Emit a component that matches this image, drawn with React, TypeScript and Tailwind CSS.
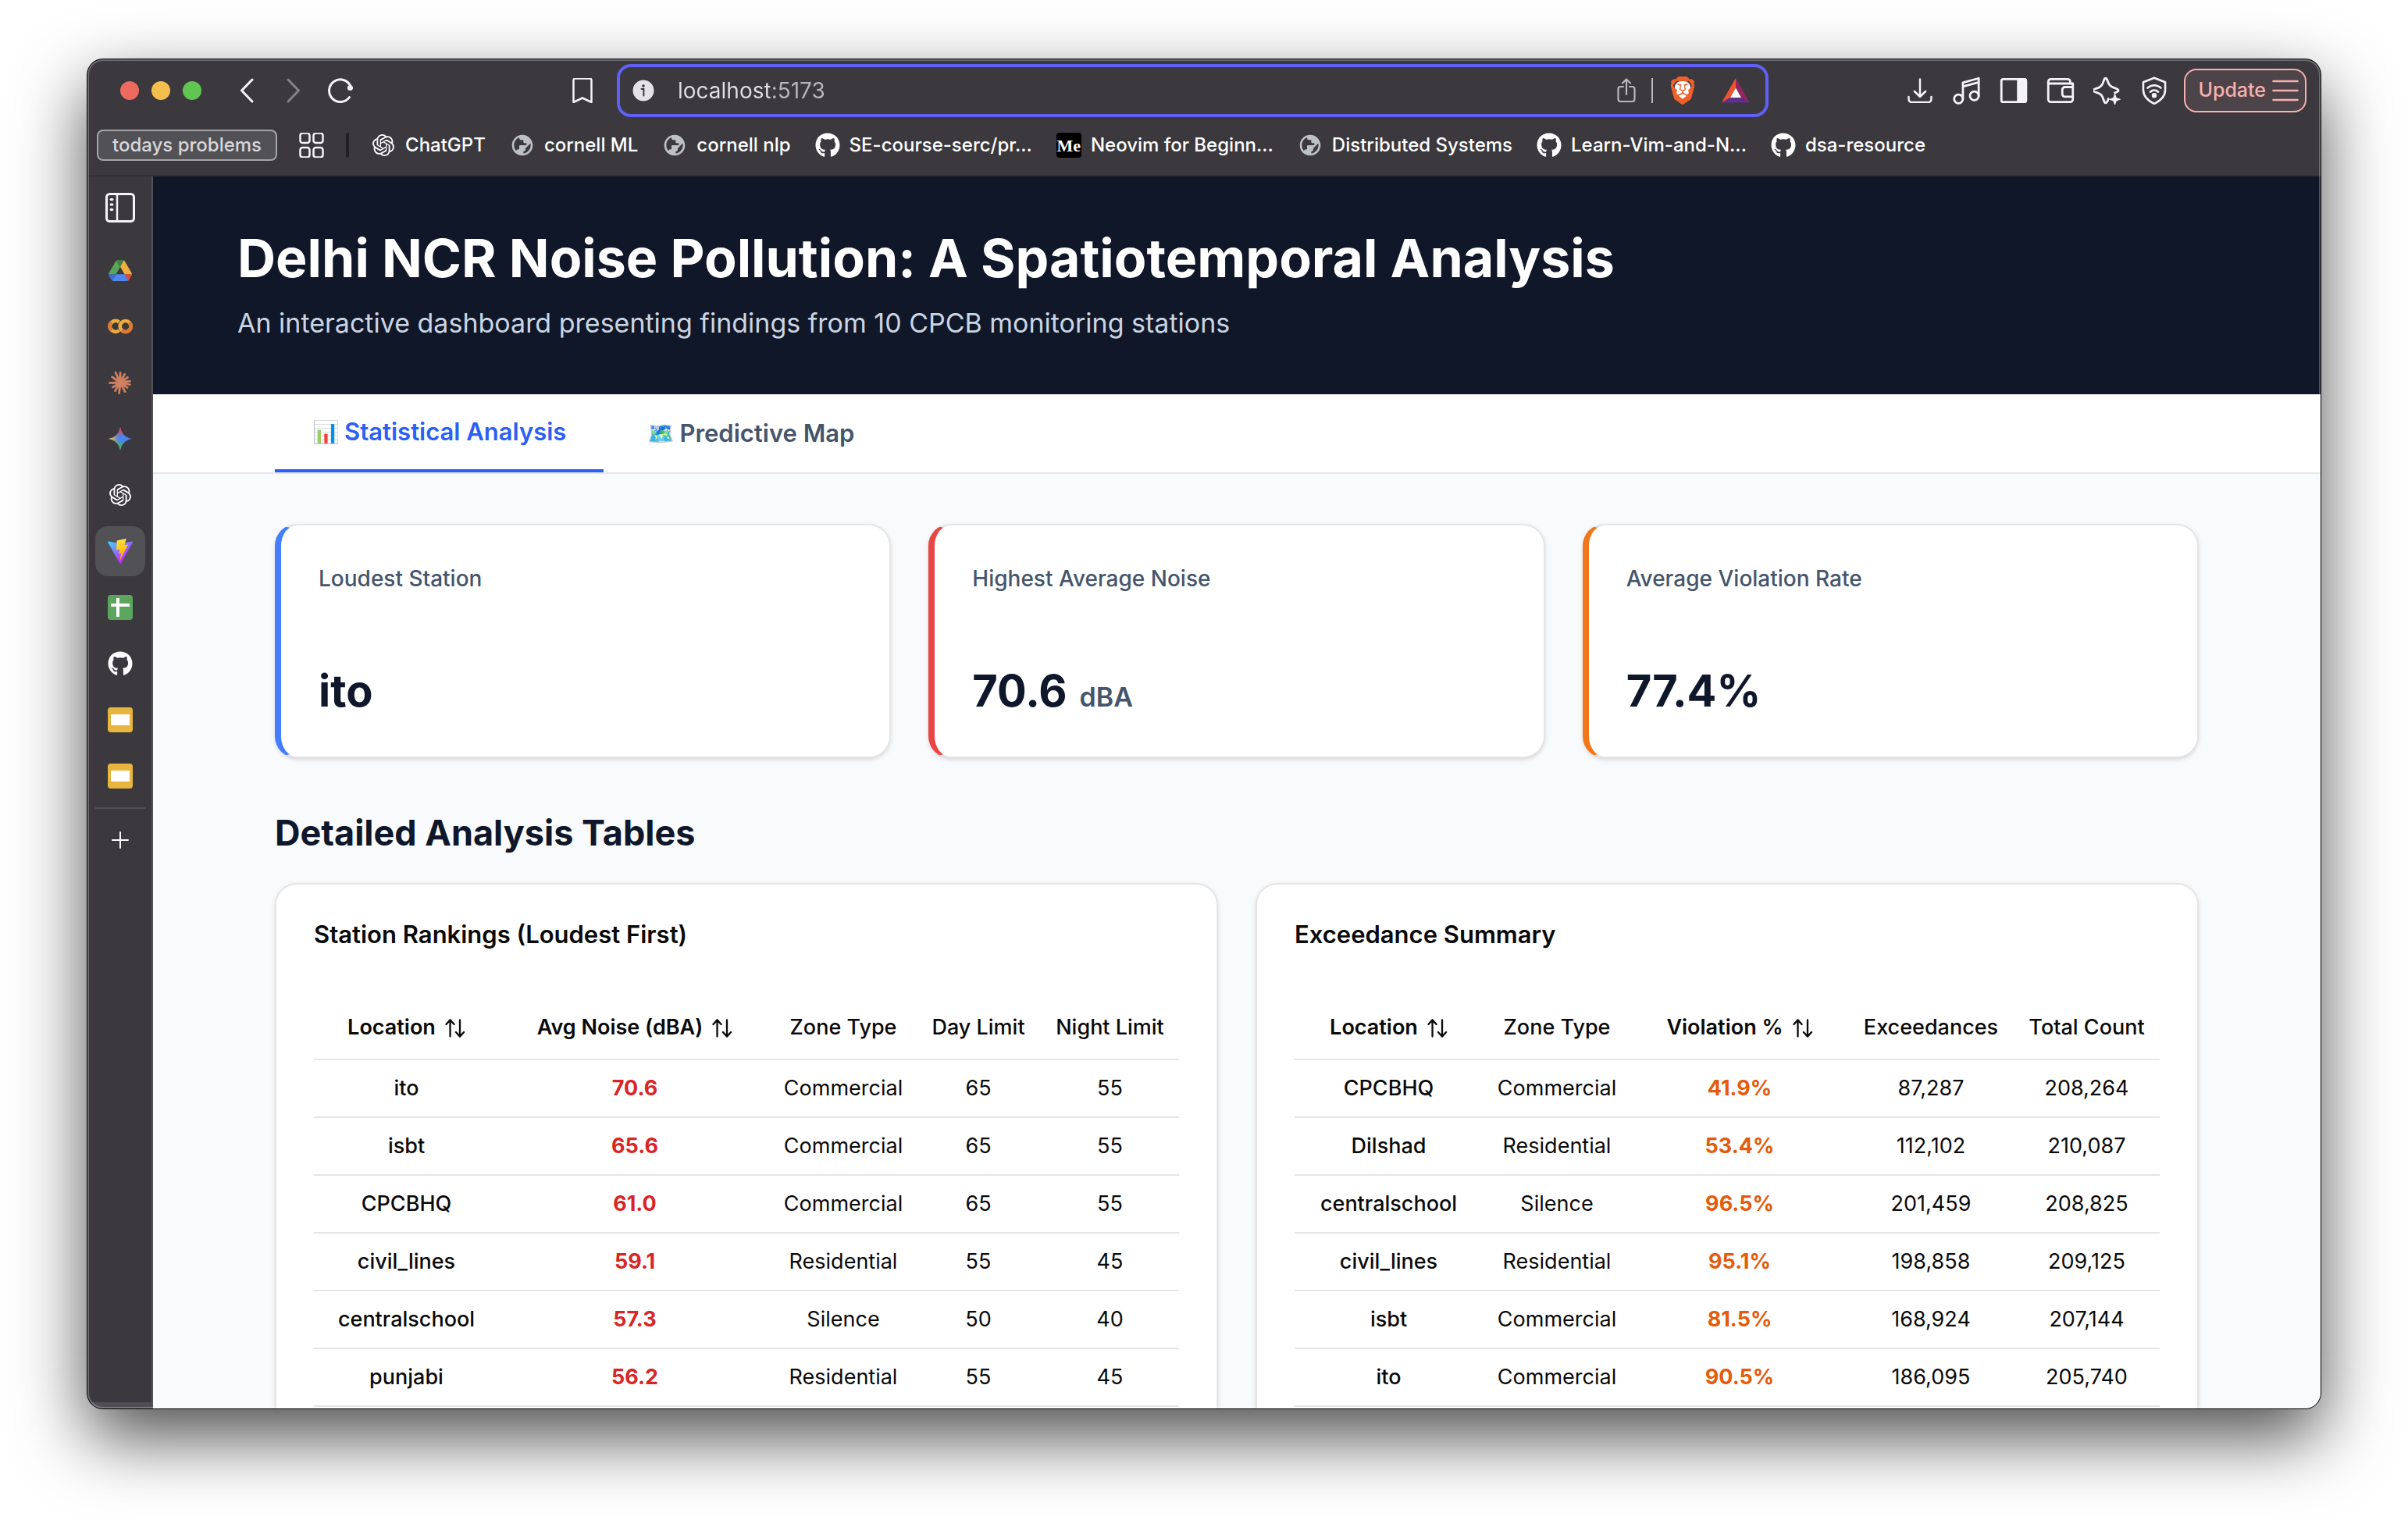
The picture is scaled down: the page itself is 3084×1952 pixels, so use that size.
import type { ReactNode } from 'react';
import { FaGithub } from 'react-icons/fa';
import { MdPublic } from 'react-icons/md';
import { SiBrave } from 'react-icons/si';

/* ---------- toolbar icons ---------- */

function Line({ children, className = 'size-8', width = 2.5 }: { children: ReactNode; className?: string; width?: number }) {
  return (
    <svg viewBox="0 0 32 32" className={className} fill="none" stroke="currentColor" strokeWidth={width} strokeLinecap="round" strokeLinejoin="round" aria-hidden="true">
      {children}
    </svg>
  );
}

const BackIcon = () => (
  <Line width={3}><path d="M23 2 L9.5 16 L23 30" /></Line>
);
const ForwardIcon = () => (
  <Line width={3}><path d="M9 2 L22.5 16 L9 30" /></Line>
);
const ReloadIcon = () => (
  <Line width={3}>
    <path d="M27.5 24.500 A14.3 14.3 0 1 1 29 10.500" />
    <circle cx="28.500" cy="12.500" r="3.600" fill="currentColor" stroke="none" />
  </Line>
);
const BookmarkIcon = () => (
  <Line><path d="M4.500 2.500 a2.500 2.500 0 0 1 2.500 -2 h18 a2.500 2.500 0 0 1 2.500 2.500 V31 L16 25.500 L4.500 31 Z" /></Line>
);
const InfoIcon = () => (
  <svg viewBox="0 0 28 28" className="size-7" aria-hidden="true">
    <circle cx="14" cy="14" r="13.500" fill="#e4e2e8" />
    <circle cx="14" cy="8" r="1.800" fill="#3b393e" />
    <path d="M11.500 12 H14.400 V20.500" fill="none" stroke="#3b393e" strokeWidth="2" strokeLinecap="round" />
  </svg>
);
const ShareIcon = () => (
  <svg viewBox="0 0 24 32" className="h-8 w-6" fill="none" stroke="currentColor" strokeWidth="2.200" strokeLinecap="round" strokeLinejoin="round" aria-hidden="true">
    <path d="M8 11 H4.500 A3 3 0 0 0 1.500 14 V27 A3 3 0 0 0 4.500 30 H19.500 A3 3 0 0 0 22.500 27 V14 A3 3 0 0 0 19.500 11 H16" />
    <path d="M12 21 V2 M7 6.500 L12 1.500 L17 6.500" />
  </svg>
);
const BatIcon = () => (
  <svg viewBox="0 0 36 32" className="h-8 w-9" aria-hidden="true">
    <path d="M18 0 L0 31.500 L11 25 L18 12.500 Z" fill="#f1532f" />
    <path d="M18 0 L36 31.500 L25 25 L18 12.500 Z" fill="#92265f" />
    <path d="M0 31.500 H36 L25 25 H11 Z" fill="#5f2f8c" />
    <path d="M18 12.500 L25 25 H11 Z" fill="#fff" />
  </svg>
);
const DownloadIcon = () => (
  <Line><path d="M16 1.500 V24 M9 17 L16 24 L23 17 M1.500 24 V27 A4 4 0 0 0 5.500 31 H26.500 A4 4 0 0 0 30.500 27 V24" /></Line>
);
const MusicIcon = () => (
  <Line className="size-9">
    <circle cx="6.500" cy="25.500" r="5" />
    <circle cx="24.500" cy="22" r="5" />
    <path d="M11.500 25.500 V7 L29.500 2 V22 M11.500 11.500 L29.500 6.500" />
  </Line>
);
const PanelIcon = () => (
  <Line className="size-9">
    <rect x="2" y="3" width="28" height="26" rx="2" />
    <path d="M21 3 H28 A2 2 0 0 1 30 5 V27 A2 2 0 0 1 28 29 H21 Z" fill="currentColor" />
  </Line>
);
const WalletIcon = () => (
  <Line className="size-9">
    <path d="M30 12 V8 H2 V26 A3 3 0 0 0 5 29 H27 A3 3 0 0 0 30 26 V23" />
    <path d="M2 8 V6 A3 3 0 0 1 5 3 H24 A3 3 0 0 1 27 6 V8" />
    <path d="M30 12 H21 A3 3 0 0 0 18 15 V20 A3 3 0 0 0 21 23 H30 Z" />
  </Line>
);
const SparkleIcon = () => (
  <Line className="size-9">
    <path d="M14 2 C15 2 15.500 3 16 4.500 C17.500 9 19 11.500 24 13 C27.500 14 28.500 14.500 28.500 16 C28.500 17.300 27 17.800 24.500 18.500 M17 25.500 C16.300 28.500 15.500 30 14 30 C12.700 30 12.200 28.500 11.500 26 C10 21.500 8.500 19.500 4 18.300 C1 17.500 -0.300 17 -0.300 16 C-0.300 14.700 1 14.300 4 13.500 C9 12 10.300 9.500 11.800 5 C12.300 3 13 2 14 2" />
    <path d="M24.500 20 L26 24.500 L30.500 26 L26 27.500 L24.500 32 L23 27.500 L18.500 26 L23 24.500 Z" fill="currentColor" strokeWidth="1" />
  </Line>
);
const VpnIcon = () => (
  <Line className="size-9" width={2.3}>
    <path d="M16 1.500 L28.500 6.500 V15 C28.500 22.500 22 28 16 31 C10 28 3.500 22.500 3.500 15 V6.500 Z" />
    <path d="M8.500 13 C13 9 19 9 23.500 13 M11.500 17.500 C14.200 15 17.800 15 20.500 17.500" />
    <circle cx="16" cy="21.500" r="1.700" fill="currentColor" />
  </Line>
);
const MenuIcon = () => (
  <svg viewBox="0 0 34 28" className="h-7 w-[34px]" stroke="currentColor" strokeWidth="2.500" strokeLinecap="round" aria-hidden="true">
    <path d="M1.500 2 H32.500 M1.500 14 H32.500 M1.500 26 H32.500" />
  </svg>
);
const AppsIcon = () => (
  <Line>
    <rect x="1.500" y="0.500" width="12" height="12.500" rx="3" />
    <rect x="18.500" y="0.500" width="12" height="12.500" rx="3" />
    <rect x="1.500" y="19" width="12" height="12.500" rx="3" />
    <rect x="18.500" y="19" width="12" height="12.500" rx="3" />
  </Line>
);

/* ---------- brand marks ---------- */

const OpenAiIcon = () => (
  <svg viewBox="0 0 24 24" className="size-7" fill="currentColor" aria-hidden="true">
    <path d="M22.2819 9.8211a5.9847 5.9847 0 0 0-.5157-4.9108 6.0462 6.0462 0 0 0-6.5098-2.9A6.0651 6.0651 0 0 0 4.9807 4.1818a5.9847 5.9847 0 0 0-3.9977 2.9 6.0462 6.0462 0 0 0 .7427 7.0966 5.98 5.98 0 0 0 .511 4.9107 6.051 6.051 0 0 0 6.5146 2.9001A5.9847 5.9847 0 0 0 13.2599 24a6.0557 6.0557 0 0 0 5.7718-4.2058 5.9894 5.9894 0 0 0 3.9977-2.9001 6.0557 6.0557 0 0 0-.7475-7.0729zm-9.022 12.6081a4.4755 4.4755 0 0 1-2.8764-1.0408l.1419-.0804 4.7783-2.7582a.7948.7948 0 0 0 .3927-.6813v-6.7369l2.02 1.1686a.071.071 0 0 1 .038.052v5.5826a4.504 4.504 0 0 1-4.4945 4.4944zm-9.6607-4.1254a4.4708 4.4708 0 0 1-.5346-3.0137l.142.0852 4.783 2.7582a.7712.7712 0 0 0 .7806 0l5.8428-3.3685v2.3324a.0804.0804 0 0 1-.0332.0615L9.74 19.9502a4.4992 4.4992 0 0 1-6.1408-1.6464zM2.3408 7.8956a4.485 4.485 0 0 1 2.3655-1.9728V11.6a.7664.7664 0 0 0 .3879.6765l5.8144 3.3543-2.0201 1.1685a.0757.0757 0 0 1-.071 0l-4.8303-2.7865A4.504 4.504 0 0 1 2.3408 7.872zm16.5963 3.8558L13.1038 8.364 15.1192 7.2a.0757.0757 0 0 1 .071 0l4.8303 2.7913a4.4944 4.4944 0 0 1-.6765 8.1042v-5.6772a.79.79 0 0 0-.407-.667zm2.0107-3.0231l-.142-.0852-4.7735-2.7818a.7759.7759 0 0 0-.7854 0L9.409 9.2297V6.8974a.0662.0662 0 0 1 .0284-.0615l4.8303-2.7866a4.4992 4.4992 0 0 1 6.6802 4.66zM8.3065 12.863l-2.02-1.1638a.0804.0804 0 0 1-.038-.0567V6.0742a4.4992 4.4992 0 0 1 7.3757-3.4537l-.142.0805L8.704 5.459a.7948.7948 0 0 0-.3927.6813zm1.0976-2.3654l2.602-1.4998 2.6069 1.4998v2.9994l-2.5974 1.4997-2.6067-1.4997Z" />
  </svg>
);
const BraveIcon = () => (
  <span className="grid size-9 place-items-center">
    <span className="col-start-1 row-start-1 h-6 w-5 rounded-lg bg-white" />
    <SiBrave className="col-start-1 row-start-1 size-9 text-[#f0602a]" aria-hidden="true" />
  </span>
);
const DriveIcon = () => (
  <svg viewBox="0 0 87.3 78" className="h-[27px] w-[30px]" aria-hidden="true">
    <path fill="#3b6fdc" d="m6.6 66.85 3.85 6.65c.8 1.4 1.95 2.5 3.3 3.3l13.75-23.8h-27.5c0 1.55.4 3.1 1.2 4.5z" />
    <path fill="#5aa55a" d="m43.65 25-13.75-23.8c-1.35.8-2.5 1.9-3.3 3.3l-25.4 44a9.06 9.06 0 0 0 -1.2 4.5h27.5z" />
    <path fill="#db4b3a" d="m73.55 76.8c1.35-.8 2.5-1.9 3.3-3.3l1.6-2.75 7.65-13.25c.8-1.4 1.2-2.95 1.2-4.5h-27.502l5.852 11.5z" />
    <path fill="#438043" d="m43.65 25 13.75-23.8c-1.35-.8-2.9-1.2-4.5-1.2h-18.5c-1.6 0-3.15.45-4.5 1.2z" />
    <path fill="#5186ec" d="m59.8 53h-32.3l-13.75 23.8c1.35.8 2.9 1.2 4.5 1.2h50.8c1.6 0 3.15-.45 4.5-1.2z" />
    <path fill="#f0b03c" d="m73.4 26.5-12.7-22c-.8-1.4-1.95-2.5-3.3-3.3l-13.75 23.8 16.15 28h27.45c0-1.55-.4-3.1-1.2-4.5z" />
  </svg>
);
const ColabIcon = () => (
  <svg viewBox="0 0 32 20" className="h-5 w-8" fill="none" strokeWidth="4.600" aria-hidden="true">
    <path d="M14.500 4.500 A7 7 0 1 0 14.500 15.300" stroke="#eeae3c" />
    <path d="M4.800 4.600 A7 7 0 0 0 4.800 15.400" stroke="#dd7a33" />
    <circle cx="22.700" cy="10" r="7" stroke="#eeae3c" />
    <path d="M27.600 5 A7 7 0 0 1 17.800 15" stroke="#dd7a33" />
  </svg>
);
const rays = [
  [0, 14], [28, 13.5], [55, 13], [82, 14], [102, 14], [125, 12.5], [152, 14.5], [186, 15], [212, 14], [238, 12.5], [268, 15], [305, 14], [335, 15.5],
];
const ClaudeIcon = () => (
  <svg viewBox="0 0 32 32" className="size-8" aria-hidden="true">
    {rays.map(([angle, length]) => (
      <path key={angle} transform={`translate(16 16) rotate(${angle})`} d={`M-1.700 0 L-1.300 ${-length + 0.6} Q0 ${-length - 0.6} 1.300 ${-length + 0.6} L1.700 0 Z`} fill="#d08162" />
    ))}
    <circle cx="16" cy="16" r="3.500" fill="#d08162" />
  </svg>
);
const GeminiIcon = () => (
  <svg viewBox="0 0 30 30" className="size-[30px]" aria-hidden="true">
    <defs>
      <linearGradient id="gemTop" x1="15" y1="0" x2="17" y2="15" gradientUnits="userSpaceOnUse">
        <stop offset="0.25" stopColor="#e6484b" />
        <stop offset="0.8" stopColor="#e6484b" stopOpacity="0" />
      </linearGradient>
      <linearGradient id="gemLeft" x1="0" y1="15" x2="14" y2="15" gradientUnits="userSpaceOnUse">
        <stop offset="0.2" stopColor="#f3bb33" />
        <stop offset="0.9" stopColor="#f3bb33" stopOpacity="0" />
      </linearGradient>
      <linearGradient id="gemBottom" x1="14" y1="30" x2="17" y2="15" gradientUnits="userSpaceOnUse">
        <stop offset="0.3" stopColor="#4cb063" />
        <stop offset="0.9" stopColor="#4cb063" stopOpacity="0" />
      </linearGradient>
    </defs>
    {['#4b85f0', 'url(#gemTop)', 'url(#gemBottom)', 'url(#gemLeft)'].map((fill) => (
      <path key={fill} fill={fill} d="M15 0 C16.500 8.500 21.500 13.500 30 15 C21.500 16.500 16.500 21.500 15 30 C13.500 21.500 8.500 16.500 0 15 C8.500 13.500 13.500 8.500 15 0 Z" />
    ))}
  </svg>
);
const ViteIcon = () => (
  <svg viewBox="0 0 256 257" className="size-8" aria-hidden="true">
    <defs>
      <linearGradient id="viteBack" x1="-.828%" x2="57.636%" y1="7.652%" y2="78.411%">
        <stop offset="0%" stopColor="#41d1ff" />
        <stop offset="100%" stopColor="#bd34fe" />
      </linearGradient>
      <linearGradient id="viteBolt" x1="43.376%" x2="50.316%" y1="2.242%" y2="89.03%">
        <stop offset="0%" stopColor="#ffea83" />
        <stop offset="8.333%" stopColor="#ffdd35" />
        <stop offset="100%" stopColor="#ffa800" />
      </linearGradient>
    </defs>
    <path fill="url(#viteBack)" d="M255.153 37.938L134.897 252.976c-2.483 4.44-8.862 4.466-11.382.048L.875 37.958c-2.746-4.814 1.371-10.646 6.827-9.67l120.385 21.517a6.537 6.537 0 0 0 2.322-.004l117.867-21.483c5.438-.991 9.574 4.796 6.877 9.62Z" />
    <path fill="url(#viteBolt)" d="M185.432.063L96.44 17.501a3.268 3.268 0 0 0-2.634 3.014l-5.474 92.456a3.268 3.268 0 0 0 3.997 3.378l24.777-5.718c2.318-.535 4.413 1.507 3.936 3.838l-7.361 36.047c-.495 2.426 1.782 4.5 4.151 3.78l15.304-4.649c2.372-.72 4.652 1.36 4.15 3.788l-11.698 56.621c-.732 3.542 3.979 5.473 5.943 2.437l1.313-2.028l72.516-144.72c1.215-2.423-.88-5.186-3.54-4.672l-25.505 4.922c-2.396.462-4.435-1.77-3.759-4.114l16.646-57.705c.677-2.35-1.37-4.583-3.769-4.113Z" />
  </svg>
);
const SheetsIcon = () => (
  <svg viewBox="0 0 32 32" className="size-8" aria-hidden="true">
    <rect width="32" height="32" rx="4" fill="#5ba55c" />
    <path d="M11 4 H15 V11 H28 V15 H15 V28 H11 V15 H4 V11 H11 Z" fill="#fff" />
  </svg>
);
const SlidesIcon = () => (
  <svg viewBox="0 0 32 32" className="size-8" aria-hidden="true">
    <rect width="32" height="32" rx="4" fill="#e8b63e" />
    <rect x="4" y="9" width="24" height="14" fill="#fff" />
  </svg>
);
const TabsPanelIcon = () => (
  <svg viewBox="0 0 38 38" className="size-[38px]" fill="none" stroke="currentColor" strokeWidth="3" aria-hidden="true">
    <rect x="1.500" y="1.500" width="35" height="35" rx="4" />
    <path d="M15 2 V36" strokeWidth="2.500" />
    <g fill="currentColor" stroke="none">
      <ellipse cx="8" cy="8.500" rx="2.500" ry="1.700" />
      <ellipse cx="8" cy="15" rx="2.500" ry="1.700" />
      <ellipse cx="8" cy="21.500" rx="2.500" ry="1.700" />
    </g>
  </svg>
);
const PlusIcon = () => (
  <svg viewBox="0 0 22 22" className="size-[22px]" stroke="currentColor" strokeWidth="2" strokeLinecap="round" aria-hidden="true">
    <path d="M11 1 V21 M1 11 H21" />
  </svg>
);
const GithubIcon = () => <FaGithub className="size-8" aria-hidden="true" />;
const GlobeIcon = () => <MdPublic className="size-8 -scale-x-100 text-[#bdc1c6]" aria-hidden="true" />;
const MediumIcon = () => (
  <span className="flex size-8 items-center justify-center rounded-sm bg-black font-['Liberation_Serif',serif] text-[22px] font-bold">Me</span>
);

/* ---------- browser chrome ---------- */

const bookmarks: { label: string; icon: ReactNode }[] = [
  { label: 'ChatGPT', icon: <OpenAiIcon /> },
  { label: 'cornell ML', icon: <GlobeIcon /> },
  { label: 'cornell nlp', icon: <GlobeIcon /> },
  { label: 'SE-course-serc/pr...', icon: <GithubIcon /> },
  { label: 'Neovim for Beginn...', icon: <MediumIcon /> },
  { label: 'Distributed Systems', icon: <GlobeIcon /> },
  { label: 'Learn-Vim-and-N...', icon: <GithubIcon /> },
  { label: 'dsa-resource', icon: <GithubIcon /> },
];

const toolbarActions: { label: string; icon: ReactNode }[] = [
  { label: 'Downloads', icon: <DownloadIcon /> },
  { label: 'Media', icon: <MusicIcon /> },
  { label: 'Side panel', icon: <PanelIcon /> },
  { label: 'Wallet', icon: <WalletIcon /> },
  { label: 'Assistant', icon: <SparkleIcon /> },
  { label: 'VPN', icon: <VpnIcon /> },
];

const verticalTabs: { label: string; icon: ReactNode; active?: boolean }[] = [
  { label: 'Drive', icon: <DriveIcon /> },
  { label: 'Colab', icon: <ColabIcon /> },
  { label: 'Claude', icon: <ClaudeIcon /> },
  { label: 'Gemini', icon: <GeminiIcon /> },
  { label: 'ChatGPT tab', icon: <OpenAiIcon /> },
  { label: 'Dashboard', icon: <ViteIcon />, active: true },
  { label: 'Sheets', icon: <SheetsIcon /> },
  { label: 'GitHub', icon: <GithubIcon /> },
  { label: 'Slides one', icon: <SlidesIcon /> },
  { label: 'Slides two', icon: <SlidesIcon /> },
];

function Toolbar() {
  return (
    <div className="flex h-20 items-center pl-[42px] pr-[18px] text-[#f4f3f6]">
      <div className="flex gap-4">
        <button aria-label="Close" className="size-6 rounded-full bg-[#ed6a5f]" />
        <button aria-label="Minimize" className="size-6 rounded-full bg-[#f5bf4f]" />
        <button aria-label="Zoom" className="size-6 rounded-full bg-[#61c554]" />
      </div>
      <div className="ml-[42px] flex gap-7">
        <button aria-label="Back"><BackIcon /></button>
        <button aria-label="Forward" className="text-[#858389]"><ForwardIcon /></button>
        <button aria-label="Reload"><ReloadIcon /></button>
      </div>
      <div className="ml-[278px] mr-[176px] flex flex-1 items-center gap-7">
        <button aria-label="Bookmark"><BookmarkIcon /></button>
        <div className="flex h-[68px] flex-1 items-center rounded-[18px] border-4 border-[#6160f6] pl-4 pr-5 text-[#b9b7bd]">
          <InfoIcon />
          <input
            aria-label="Address"
            defaultValue="localhost:5173"
            className="ml-[30px] min-w-0 flex-1 bg-[linear-gradient(90deg,#e2e0e6_118px,#b9b7bd_118px)] bg-clip-text text-[28px] text-transparent outline-none"
          />
          <button aria-label="Share"><ShareIcon /></button>
          <span className="ml-5 h-8 w-0.5 bg-[#b9b7bd]" />
          <button aria-label="Shields" className="ml-5"><BraveIcon /></button>
          <button aria-label="Rewards" className="ml-8"><BatIcon /></button>
        </div>
      </div>
      <div className="flex items-center gap-6">
        {toolbarActions.map((a) => (
          <button key={a.label} aria-label={a.label} className="grid size-9 place-items-center">{a.icon}</button>
        ))}
      </div>
      <button className="ml-5 flex h-14 items-center gap-2 rounded-2xl border-2 border-[#f8b1b1] bg-[#4c4448] pl-4 pr-2 text-[25px] font-medium text-[#f8b1b1]">
        Update
        <MenuIcon />
      </button>
    </div>
  );
}

function BookmarksBar() {
  return (
    <nav aria-label="Bookmarks" className="flex h-[60px] items-center whitespace-nowrap pl-3 text-[24px] font-medium text-white">
      <button className="h-10 rounded-lg border-2 border-[#a5a4a9] bg-[#525156] px-[18px] leading-9 text-[#d9d8dc]">todays problems</button>
      <button aria-label="Tab groups" className="ml-7 text-[#f4f3f6]"><AppsIcon /></button>
      <span className="mx-7 h-8 w-1 rounded-full bg-[#222024]" />
      <div className="flex gap-[31px]">
        {bookmarks.map((b) => (
          <a key={b.label} href="#" className="flex items-center gap-3">
            <span className="grid size-8 place-items-center">{b.icon}</span>
            {b.label}
          </a>
        ))}
      </div>
    </nav>
  );
}

function TabStrip() {
  return (
    <aside className="flex w-[84px] shrink-0 flex-col items-center gap-2 border-r-2 border-[#525156] bg-[#3b393e] pl-0.5 pt-2 text-white">
      <button aria-label="Toggle tab strip" className="mb-2 grid size-16 place-items-center text-[#f4f3f6]"><TabsPanelIcon /></button>
      {verticalTabs.map((t) => (
        <button key={t.label} aria-label={t.label} className={t.active ? 'grid size-16 place-items-center rounded-2xl bg-[#525156]' : 'grid size-16 place-items-center rounded-2xl'}>
          {t.icon}
        </button>
      ))}
      <span className="h-0.5 w-16 shrink-0 bg-[#525156]" />
      <button aria-label="New tab" className="grid size-16 place-items-center"><PlusIcon /></button>
      <span className="mt-auto h-2 w-full bg-[#504e54]" />
    </aside>
  );
}

/* ---------- dashboard ---------- */

const SortIcon = () => (
  <svg viewBox="0 0 28 26" className="h-6 w-[26px]" fill="none" stroke="currentColor" strokeWidth="2.500" strokeLinecap="round" strokeLinejoin="round" aria-hidden="true">
    <path d="M7 24.500 V1.500 M1.500 7.500 L7 1.500 L12.500 7.500" />
    <path d="M20.500 1.500 V24.500 M15 18.500 L20.500 24.500 L26 18.500" />
  </svg>
);

const stats = [
  { label: 'Loudest Station', value: 'ito', unit: '', accent: 'border-l-[#447eff]' },
  { label: 'Highest Average Noise', value: '70.6', unit: 'dBA', accent: 'border-l-[#e84545]' },
  { label: 'Average Violation Rate', value: '77.4%', unit: '', accent: 'border-l-[#f4761b]' },
];

type Column = { label: string; width: string; sortable?: boolean; cell: string };

const rankingColumns: Column[] = [
  { label: 'Location', width: 'w-[237px]', sortable: true, cell: 'font-medium' },
  { label: 'Avg Noise (dBA)', width: 'w-[348px]', sortable: true, cell: 'font-bold text-[#d82525]' },
  { label: 'Zone Type', width: 'w-[186px]', cell: '' },
  { label: 'Day Limit', width: 'w-[160px]', cell: '' },
  { label: 'Night Limit', width: 'w-[177px]', cell: '' },
];
const rankingRows = [
  ['ito', '70.6', 'Commercial', '65', '55'],
  ['isbt', '65.6', 'Commercial', '65', '55'],
  ['CPCBHQ', '61.0', 'Commercial', '65', '55'],
  ['civil_lines', '59.1', 'Residential', '55', '45'],
  ['centralschool', '57.3', 'Silence', '50', '40'],
  ['punjabi', '56.2', 'Residential', '55', '45'],
];

const exceedanceColumns: Column[] = [
  { label: 'Location', width: 'w-[241px]', sortable: true, cell: 'font-medium' },
  { label: 'Zone Type', width: 'w-[190px]', cell: '' },
  { label: 'Violation %', width: 'w-[278px]', sortable: true, cell: 'font-bold text-[#e35b0b]' },
  { label: 'Exceedances', width: 'w-[212px]', cell: '' },
  { label: 'Total Count', width: 'w-[187px]', cell: '' },
];
const exceedanceRows = [
  ['CPCBHQ', 'Commercial', '41.9%', '87,287', '208,264'],
  ['Dilshad', 'Residential', '53.4%', '112,102', '210,087'],
  ['centralschool', 'Silence', '96.5%', '201,459', '208,825'],
  ['civil_lines', 'Residential', '95.1%', '198,858', '209,125'],
  ['isbt', 'Commercial', '81.5%', '168,924', '207,144'],
  ['ito', 'Commercial', '90.5%', '186,095', '205,740'],
];

function TableCard({ title, columns, rows }: { title: string; columns: Column[]; rows: string[][] }) {
  return (
    <section className="rounded-[28px] border-2 border-[#e5e5e5] bg-white p-12 text-[#0a0a0a] shadow-[0_2px_6px_rgb(0_0_0/0.1),0_2px_4px_-2px_rgb(0_0_0/0.1)]">
      <h3 className="text-[31px] font-semibold leading-8">{title}</h3>
      <table className="mt-16 w-full table-fixed border-separate border-spacing-0 text-center text-[27px]">
        <thead>
          <tr>
            {columns.map((c) => (
              <th key={c.label} className={`${c.width} h-[81px] whitespace-nowrap border-b-2 border-[#e5e5e5] p-0 font-medium`}>
                {c.sortable ? (
                  <button className="inline-flex items-center gap-3 font-semibold">
                    {c.label}
                    <SortIcon />
                  </button>
                ) : (
                  c.label
                )}
              </th>
            ))}
          </tr>
        </thead>
        <tbody>
          {rows.map((row) => (
            <tr key={row[0]}>
              {row.map((value, i) => (
                <td key={columns[i].label} className={`h-[74px] border-b-2 border-[#e5e5e5] p-0 ${columns[i].cell}`}>{value}</td>
              ))}
            </tr>
          ))}
        </tbody>
      </table>
    </section>
  );
}

function Dashboard() {
  return (
    <div className="min-w-0 flex-1 overflow-hidden bg-[#f9fafc]">
      <header className="bg-[#101729] pb-[63px] pt-16">
        <div className="mx-auto max-w-[2560px]">
          <h1 className="text-[68px] font-bold leading-[80px] text-white">Delhi NCR Noise Pollution: A Spatiotemporal Analysis</h1>
          <p className="mt-4 text-[34px] leading-[56px] text-[#cad5e2]">An interactive dashboard presenting findings from 10 CPCB monitoring stations</p>
        </div>
      </header>
      <nav aria-label="Sections" className="border-b-2 border-[#e2e8f0] bg-white">
        <div className="mx-auto flex max-w-[2560px] gap-2 px-12 text-[31px] font-semibold leading-[48px]">
          <button className="flex items-center gap-1.5 border-b-4 border-[#2b5ff5] px-12 py-6 text-[#2b5ff5]">
            <span className="text-[28px]">📊</span>
            Statistical Analysis
          </button>
          <button className="flex items-center gap-1.5 px-12 py-6 text-[#45556c]">
            <span className="text-[28px]">🗺️</span>
            Predictive Map
          </button>
        </div>
      </nav>
      <main className="mx-auto max-w-[2560px] px-12 py-16">
        <div className="grid grid-cols-3 gap-12">
          {stats.map((s) => (
            <section key={s.label} className={`flex h-[300px] flex-col justify-between rounded-[28px] border-2 border-l-8 border-[#e5e5e5] bg-white p-12 shadow-[0_2px_6px_rgb(0_0_0/0.1),0_2px_4px_-2px_rgb(0_0_0/0.1)] ${s.accent}`}>
              <h3 className="text-[28px] font-medium leading-10 text-[#45556c]">{s.label}</h3>
              <p className="text-[56px] font-bold leading-[72px] text-[#0f172b]">
                {s.value}
                {s.unit && <span className="ml-4 text-[34px] font-semibold leading-none text-[#45556c]">{s.unit}</span>}
              </p>
            </section>
          ))}
        </div>
        <h2 className="mt-16 text-[45px] font-bold leading-[64px] text-[#0f172b]">Detailed Analysis Tables</h2>
        <div className="mt-8 grid grid-cols-2 gap-12">
          <TableCard title="Station Rankings (Loudest First)" columns={rankingColumns} rows={rankingRows} />
          <TableCard title="Exceedance Summary" columns={exceedanceColumns} rows={exceedanceRows} />
        </div>
      </main>
    </div>
  );
}

export default function App() {
  return (
    <div className="flex h-screen flex-col overflow-hidden bg-white px-28 pb-[148px] pt-[76px] font-['Inter',sans-serif]">
      <div className="relative flex min-h-0 flex-1 flex-col overflow-hidden rounded-[20px] bg-[#3b393e] shadow-[0_0_0_1px_#000,0_36px_90px_rgb(0_0_0/0.7)]">
        <div className="border-b-2 border-[#323035] pb-2">
          <Toolbar />
          <BookmarksBar />
        </div>
        <div className="flex min-h-0 flex-1">
          <TabStrip />
          <Dashboard />
        </div>
        <div className="pointer-events-none absolute inset-0 rounded-[20px] border-2 border-white/25" />
      </div>
    </div>
  );
}
